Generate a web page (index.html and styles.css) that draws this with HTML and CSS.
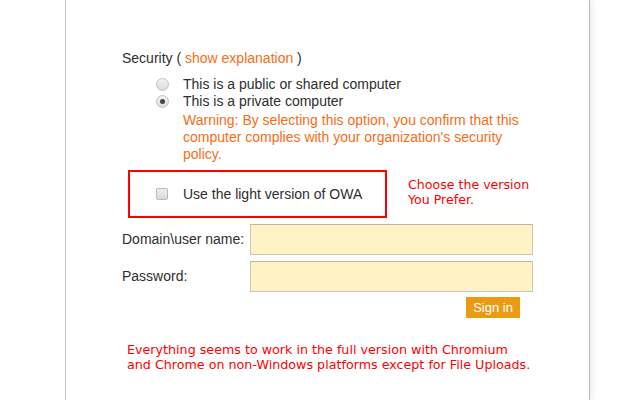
FILE: index.html
```html
<!DOCTYPE html>
<html lang="en">
<head>
<meta charset="utf-8">
<title>Outlook Web App</title>
<link rel="stylesheet" href="styles.css">
</head>
<body>
<div class="panel">
  <div class="security-title">Security ( <span class="link">show explanation</span> )</div>
  <div class="options">
    <div class="option"><span class="radio"></span><span>This is a public or shared computer</span></div>
    <div class="option"><span class="radio checked"></span><span>This is a private computer</span></div>
    <div class="warning">Warning: By selecting this option, you confirm that this computer complies with your organization's security policy.</div>
  </div>
  <div class="light-row">
    <div class="light-box"><span class="checkbox"></span><span>Use the light version of OWA</span></div>
    <div class="note">Choose the version<br>You Prefer.</div>
  </div>
  <div class="field first">
    <label class="label">Domain\user name:</label>
    <div class="input"></div>
  </div>
  <div class="field">
    <label class="label">Password:</label>
    <div class="input"></div>
  </div>
  <div class="actions"><span class="button">Sign in</span></div>
  <div class="footnote">Everything seems to work in the full version with Chromium<br>and Chrome on non-Windows platforms except for File Uploads.</div>
</div>
</body>
</html>
```
FILE: styles.css
```css
html, body {
  margin: 0;
  padding: 0;
  background: #ffffff;
  height: 100%;
  overflow: hidden;
}
body {
  font-family: "Liberation Sans", Arial, sans-serif;
  font-size: 14px;
  line-height: 17px;
  color: #2e2e2e;
}
.panel {
  box-sizing: border-box;
  margin-left: 65px;
  width: 525px;
  height: 400px;
  border-left: 1px solid #c6c6c6;
  border-right: 1px solid #bcbcbc;
  box-shadow: 3px 0 5px rgba(0, 0, 0, 0.07);
  padding: 50px 0 0 56px;
}
.link {
  color: #f76d14;
}
.options {
  margin-top: 9px;
  padding-left: 34px;
}
.option {
  display: flex;
  align-items: center;
  height: 17px;
}
.radio {
  box-sizing: border-box;
  width: 13px;
  height: 13px;
  border-radius: 50%;
  border: 1px solid #c2c2c2;
  background: linear-gradient(#f2f2f2, #dcdcdc);
  margin-right: 14px;
  display: flex;
  align-items: center;
  justify-content: center;
}
.radio.checked::after {
  content: "";
  width: 5px;
  height: 5px;
  border-radius: 50%;
  background: #444444;
}
.warning {
  color: #f76d14;
  margin: 2px 0 0 27px;
  width: 345px;
}
.light-row {
  display: flex;
  align-items: flex-start;
  margin: 7px 0 0 6px;
}
.light-box {
  box-sizing: border-box;
  width: 259px;
  border: 2px solid #ff0000;
  padding: 14px 0 13px 26px;
  display: flex;
  align-items: center;
}
.checkbox {
  box-sizing: border-box;
  width: 12px;
  height: 12px;
  border: 1px solid #b9b9b9;
  border-radius: 2px;
  background: linear-gradient(#eeeeee, #d9d9d9);
  margin-right: 15px;
  margin-top: -2px;
}
.note {
  font-family: "DejaVu Sans", sans-serif;
  font-size: 12.6px;
  line-height: 15px;
  color: #ff0000;
  margin: 7px 0 0 21px;
}
.field {
  display: flex;
  align-items: center;
  margin-top: 6px;
}
.label {
  width: 128px;
}
.input {
  box-sizing: border-box;
  width: 283px;
  height: 31px;
  background: #fff2c4;
  border: 1px solid #c9c6b8;
  border-top-color: #b9b6aa;
}
.actions {
  margin: 5px 0 0 344px;
  display: flex;
}
.button {
  background: #ea9b13;
  color: #ffffff;
  font-size: 13px;
  line-height: 21px;
  padding: 0 7px;
  width: 40px;
  text-align: center;
}
.footnote {
  font-family: "DejaVu Sans", sans-serif;
  font-size: 12.7px;
  line-height: 15px;
  color: #ff0000;
  margin: 24px 0 0 5px;
  white-space: nowrap;
}
```
